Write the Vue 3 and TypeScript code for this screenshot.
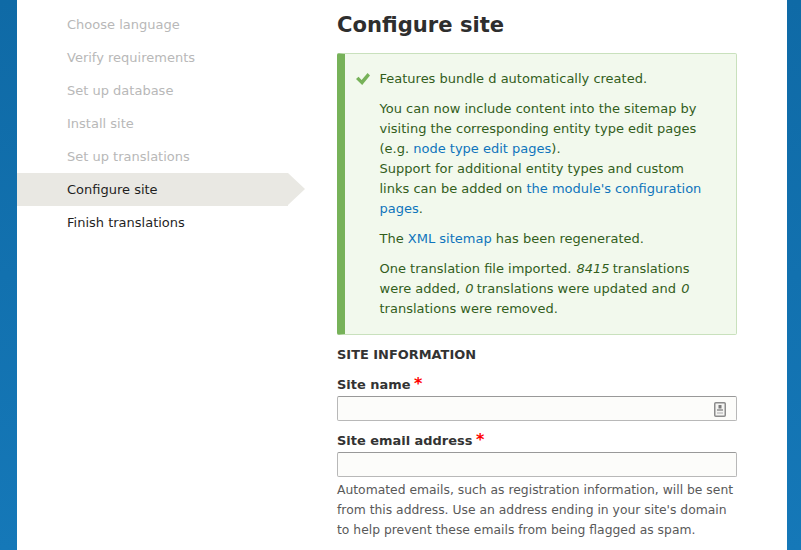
<script setup lang="ts">
const steps: { label: string; state: string }[] = [
  { label: 'Choose language', state: 'done' },
  { label: 'Verify requirements', state: 'done' },
  { label: 'Set up database', state: 'done' },
  { label: 'Install site', state: 'done' },
  { label: 'Set up translations', state: 'done' },
  { label: 'Configure site', state: 'active' },
  { label: 'Finish translations', state: 'todo' },
]
</script>

<template>
  <div class="page">
    <main class="card">
      <aside class="sidebar">
        <ol class="steps">
          <li v-for="s in steps" :key="s.label" class="step" :class="s.state">{{ s.label }}</li>
        </ol>
      </aside>
      <section class="content">
        <h1 class="title">Configure site</h1>
        <div class="message">
          <svg class="check" width="14" height="12" viewBox="0 0 14 12">
            <path d="M0 6 L2.5 3.8 L5.6 7 L11.6 0 L14 2.6 L6.2 12 Z" fill="#77b259" />
          </svg>
          <p>Features bundle d automatically created.</p>
          <p>
            You can now include content into the sitemap by visiting the corresponding entity type edit pages
            (e.g. <a>node type edit pages</a>).<br />
            Support for additional entity types and custom links can be added on <a>the module's configuration pages</a>.
          </p>
          <p>The <a>XML sitemap</a> has been regenerated.</p>
          <p>
            One translation file imported. <em>8415</em> translations were added, <em>0</em> translations were updated
            and <em>0</em> translations were removed.
          </p>
        </div>
        <h2 class="legend">SITE INFORMATION</h2>
        <div class="field">
          <label>Site name<span class="req">*</span></label>
          <div class="input">
            <svg class="contact" width="12" height="15" viewBox="0 0 12 15">
              <rect x="0.75" y="0.75" width="10.5" height="13.5" rx="1" fill="#f4f4f2" stroke="#8c8c8c" stroke-width="1.5" />
              <rect x="4.5" y="3" width="3" height="3.5" fill="#7a7a7a" />
              <rect x="3" y="7" width="6" height="2" fill="#a8a8a8" />
              <rect x="3" y="10" width="6" height="2" fill="#cfcfcf" />
            </svg>
          </div>
        </div>
        <div class="field">
          <label>Site email address<span class="req">*</span></label>
          <div class="input"></div>
          <p class="desc">
            Automated emails, such as registration information, will be sent from this address. Use an address ending in
            your site's domain to help prevent these emails from being flagged as spam.
          </p>
        </div>
      </section>
    </main>
  </div>
</template>

<style>
html, body { margin: 0; overflow: hidden; }
</style>

<style scoped>
.page {
  height: 550px;
  overflow: hidden;
  background: linear-gradient(180deg, #0f6aa6 0%, #1578b8 100%);
  padding: 0 14px 0 17px;
  font-family: "DejaVu Sans", sans-serif;
  font-size: 13px;
  line-height: 20px;
  color: #333;
}
.card {
  display: flex;
  background: #fff;
  height: 550px;
}
.sidebar {
  width: 320px;
  flex: none;
  padding-top: 8px;
}
.steps {
  list-style: none;
  margin: 0;
  padding: 0;
}
.step {
  position: relative;
  width: 271px;
  box-sizing: border-box;
  height: 33px;
  line-height: 33px;
  padding-left: 50px;
}
.step.done { color: #b8b8b8; }
.step.active { background: #e9e8e3; color: #1f1f1f; }
.step.active::after {
  content: "";
  position: absolute;
  left: 100%;
  top: 0;
  border-style: solid;
  border-width: 16.5px 0 16.5px 17px;
  border-color: transparent transparent transparent #e9e8e3;
}
.step.todo { color: #1f1f1f; }
.content {
  width: 400px;
  flex: none;
}
.title {
  margin: 0;
  padding-top: 9px;
  height: 53px;
  box-sizing: border-box;
  font-size: 21.125px;
  line-height: 32px;
  font-weight: 700;
  color: #2e2e2e;
}
.message {
  position: relative;
  box-sizing: border-box;
  height: 282px;
  background: #f2f9ed;
  border: 1px solid #c9e1bd;
  border-left: 8px solid #77b259;
  border-radius: 2px;
  padding: 15px 30px 0 34.5px;
  color: #325e1c;
}
.message p { margin: 0 0 10px; }
.message a { color: #0f75bc; }
.message em { font-style: italic; margin: 0 -1px 0 1px; }
.check {
  position: absolute;
  left: 11px;
  top: 19px;
}
.legend {
  margin: 10px 0 0;
  font-size: 12.95px;
  line-height: 20px;
  font-weight: 700;
  color: #333;
}
.field { margin-top: 8px; }
.field + .field { margin-top: 8px; }
.field label {
  display: block;
  box-sizing: border-box;
  font-size: 12.95px;
  font-weight: 700;
  height: 23px;
  padding-top: 1px;
  line-height: 20px;
  color: #333;
}
.req {
  color: #f00;
  font-size: 16px;
  margin-left: 3.5px;
}
.input {
  position: relative;
  box-sizing: border-box;
  height: 25px;
  background: #fcfcfa;
  border: 1px solid #b8b8b8;
  border-top-color: #999;
  border-radius: 2px;
}
.contact {
  position: absolute;
  right: 10px;
  top: 5px;
}
.desc {
  margin: 3px 0 0;
  color: #595959;
  font-size: 12.35px;
}
</style>
